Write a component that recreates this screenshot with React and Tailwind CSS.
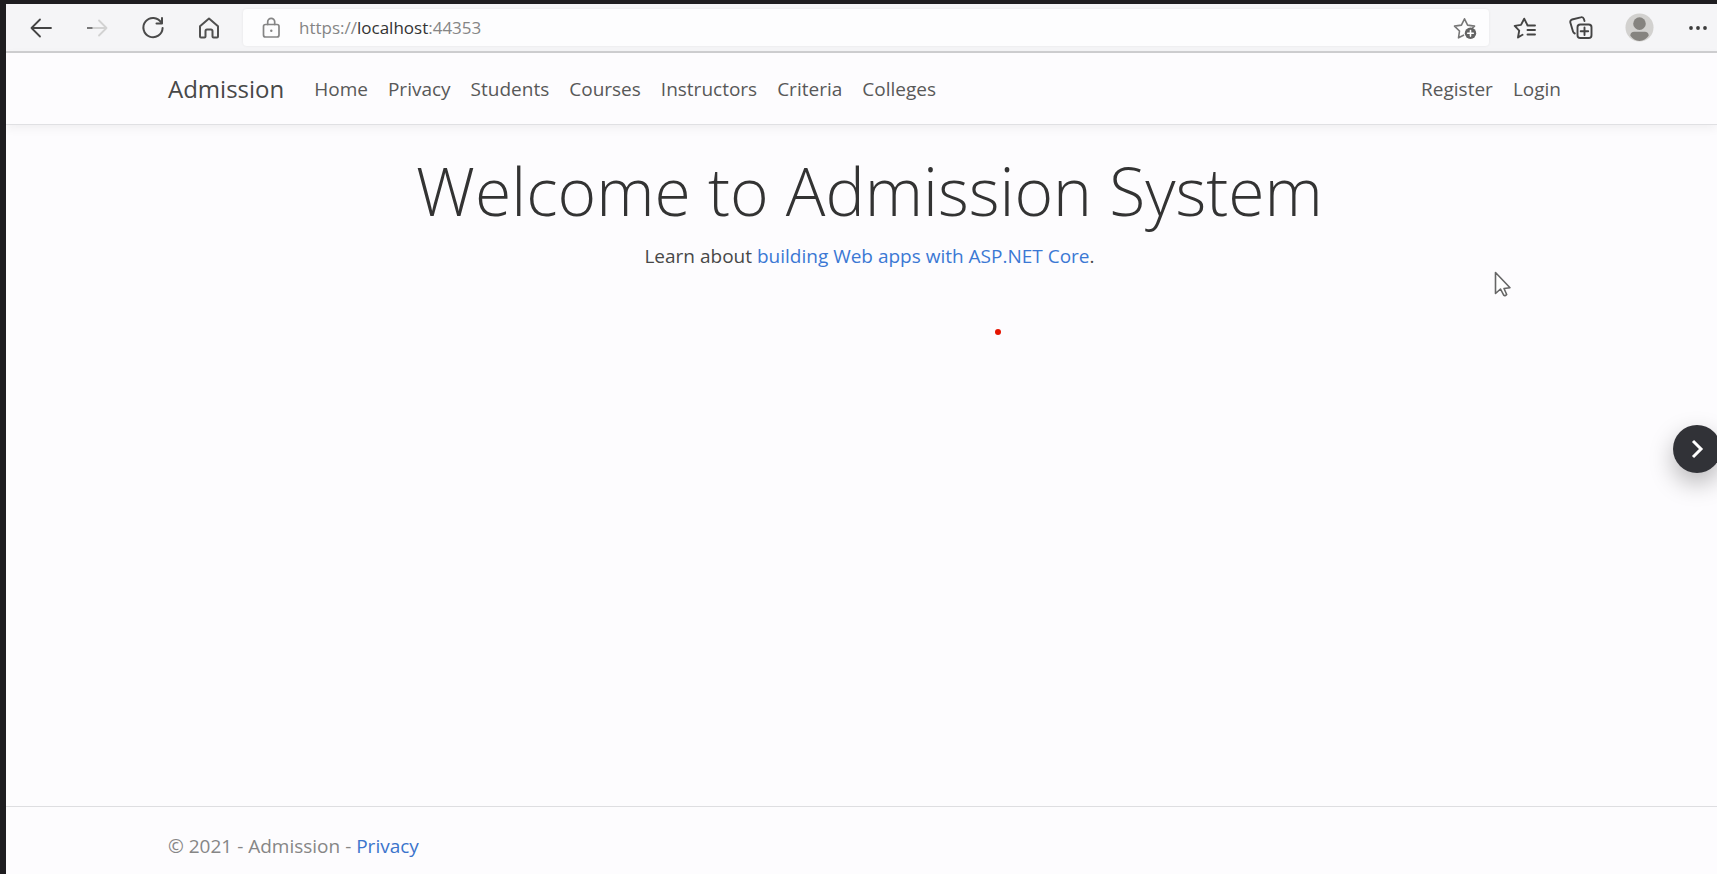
const navLinks = ["Home", "Privacy", "Students", "Courses", "Instructors", "Criteria", "Colleges"];

function Icon({ children, className = "", width = "1.8" }) {
  return (
    <svg
      viewBox="0 0 24 24"
      className={`size-6 shrink-0 ${className}`}
      fill="none"
      stroke="currentColor"
      strokeWidth={width}
      strokeLinecap="round"
      strokeLinejoin="round"
      aria-hidden="true"
    >
      {children}
    </svg>
  );
}

function ToolButton({ label, children }) {
  return (
    <button type="button" aria-label={label} className="flex h-10 w-14 shrink-0 items-center justify-center">
      {children}
    </button>
  );
}

function BrowserBar() {
  return (
    <div className="flex h-[49px] shrink-0 items-center border-b-2 border-[#cfcfd1] bg-[#f5f5f7] px-[7px]">
      <ToolButton label="Back">
        <Icon className="text-[#444]">
          <path d="M22 12H2.500M11 3.500 2.500 12l8.500 8.500" />
        </Icon>
      </ToolButton>
      <ToolButton label="Forward">
        <Icon className="text-[#d2d2d2]">
          <path d="M8 12h13.500M14 4.500l7.500 7.500-7.500 7.500" />
          <path d="M2 12h5.500" stroke="#6a6a6a" strokeLinecap="butt" />
        </Icon>
      </ToolButton>
      <ToolButton label="Refresh">
        <Icon className="text-[#4a4a4a]" width="2">
          <path d="M20.200 6.600A9.600 9.600 0 1 0 21.600 12" />
          <path d="M21 2v5.500h-5.500" />
        </Icon>
      </ToolButton>
      <ToolButton label="Home">
        <Icon className="text-[#505050]" width="2">
          <path d="M3 10.200 12 2.500l9 7.700v10.300a1 1 0 0 1-1 1h-3.500a1 1 0 0 1-1-1V15a1.500 1.500 0 0 0-1.500-1.500h-4A1.500 1.500 0 0 0 8.500 15v5.500a1 1 0 0 1-1 1H4a1 1 0 0 1-1-1z" />
        </Icon>
      </ToolButton>
      <div className="ml-1.5 flex h-[37px] min-w-0 flex-1 items-center rounded-[4px] bg-[#fdfdfe] pr-3 pl-4 shadow-[0_0_3px_rgba(0,0,0,0.07)]">
        <Icon className="text-[#858585]" width="1.7">
          <rect x="4.500" y="8.500" width="15.500" height="12.500" rx="2" />
          <path d="M8.700 8.500V5.800a3.500 3.500 0 0 1 7 0v2.700" />
          <circle cx="12.300" cy="14.800" r="1.200" fill="currentColor" stroke="none" />
        </Icon>
        <a href="https://localhost:44353" className="ml-4 text-[17px] leading-6 text-[#858585]">
          https://<span className="text-[#333]">localhost</span>:44353
        </a>
        <button type="button" aria-label="Add to favorites" className="ml-auto">
          <Icon className="text-[#777]" width="1.6">
            <path d="M10.500 19.200 5.500 21.800l1-6.800-5-4.900 6.900-1L11.500 2.800l3.100 6.300 6.900 1-2.200 2.200" />
            <circle cx="17.500" cy="17.300" r="5.700" fill="#636363" stroke="none" />
            <path d="M17.500 14.500v5.600M14.700 17.300h5.600" stroke="#fff" />
          </Icon>
        </button>
      </div>
      <div className="flex shrink-0 items-center pl-2">
        <ToolButton label="Favorites">
          <Icon className="text-[#444]" width="1.9">
            <path d="M9.500 18.800 5 21.500l1.200-6.900L1.700 9.900l6.300-1 3.200-6.200 3 6" />
            <path d="M14.500 9.500H22M14.500 14H22M14.500 18.500H22" />
          </Icon>
        </ToolButton>
        <ToolButton label="Collections">
          <Icon className="text-[#444]" width="1.9">
            <rect x="8.500" y="8.500" width="14" height="13.500" rx="2.800" fill="#f5f5f7" />
            <path d="M15.500 11.500v7.500M11.700 15.300h7.500" />
            <path d="M5.800 17.500a3 3 0 0 1-1.800-2L1.400 6.800a2.600 2.600 0 0 1 1.700-3.300l8.600-2.200a2.600 2.600 0 0 1 3.200 1.700l.6 2" />
          </Icon>
        </ToolButton>
        <button type="button" aria-label="Profile" className="ml-4 shrink-0">
          <svg viewBox="0 0 30 30" className="size-[29px]" aria-hidden="true">
            <circle cx="15" cy="15" r="14.500" fill="#d2d1cf" />
            <circle cx="15" cy="11" r="6.500" fill="#85837f" />
            <path d="M5.500 23.500a4 4 0 0 1 4-4.200h11a4 4 0 0 1 4 4.200A14 14 0 0 1 15 29a14 14 0 0 1-9.500-5.500z" fill="#85837f" />
          </svg>
        </button>
        <button type="button" aria-label="Settings and more" className="ml-8 shrink-0">
          <svg viewBox="0 0 24 24" className="size-6" fill="#3c3c3c" aria-hidden="true">
            <circle cx="5" cy="12" r="1.900" />
            <circle cx="12" cy="12" r="1.900" />
            <circle cx="19" cy="12" r="1.900" />
          </svg>
        </button>
      </div>
    </div>
  );
}

function Container({ children, className = "" }) {
  return (
    <div className="pl-4">
      <div className={`mx-auto max-w-[1403px] ${className}`}>{children}</div>
    </div>
  );
}

export default function App() {
  return (
    <div className="relative flex min-h-screen flex-col overflow-hidden border-t-4 border-l-6 border-[#1e1d20] bg-[#fdfcfe] font-['Open_Sans','Noto_Sans',sans-serif] text-[19px] leading-[30px] text-[#484848]">
      <BrowserBar />

      <header className="border-b border-[#e0e0e3] shadow-[0_3px_10px_rgba(0,0,0,0.06)]">
        <Container className="flex h-[71px] items-center">
          <a href="#home" className="mr-[30px] text-[24px] text-[#484848]">Admission</a>
          <nav className="flex flex-1 gap-5 text-[#585858]">
            {navLinks.map((label) => (
              <a key={label} href={`#${label.toLowerCase()}`}>{label}</a>
            ))}
          </nav>
          <div className="flex gap-5 pr-2.5 text-[#585858]">
            <a href="#register">Register</a>
            <a href="#login">Login</a>
          </div>
        </Container>
      </header>

      <main className="flex-1 pt-6 text-center">
        <Container>
          <h1 className="text-[66px] leading-[82px] font-light text-[#333]">Welcome to Admission System</h1>
          <p className="mt-2.5">
            Learn about{" "}
            <a href="#learn" className="text-[#3b78d4]">building Web apps with ASP.NET Core</a>.
          </p>
        </Container>
      </main>

      <footer className="border-t border-[#dedee1] text-[#868686]">
        <Container className="flex h-[67px] items-end pb-[13px]">
          <p>
            © 2021 - Admission - <a href="#privacy" className="text-[#3b74cc]">Privacy</a>
          </p>
        </Container>
      </footer>

      <span className="absolute top-[325px] left-[989px] size-1.5 rounded-full bg-[#e51400]" />

      <svg viewBox="0 0 18 27" className="absolute top-[267px] left-[1488px] h-[27px] w-[18px]" aria-hidden="true">
        <path
          d="M1.500 1.500v21l5-4.500 3.200 6.200q1.300 1.200 3-.7L10 17.500l6-.8z"
          fill="#fff"
          stroke="#666"
          strokeWidth="1.6"
          strokeLinejoin="round"
        />
      </svg>

      <button
        type="button"
        aria-label="Next"
        className="absolute top-[421px] -right-1 flex size-12 items-center justify-center rounded-full bg-[#313237] text-white shadow-[0_10px_24px_rgba(0,0,0,0.28)]"
      >
        <svg viewBox="0 0 24 24" className="size-6" fill="none" stroke="currentColor" strokeWidth="3" aria-hidden="true">
          <path d="M8 4 16 12l-8 8" />
        </svg>
      </button>
    </div>
  );
}
